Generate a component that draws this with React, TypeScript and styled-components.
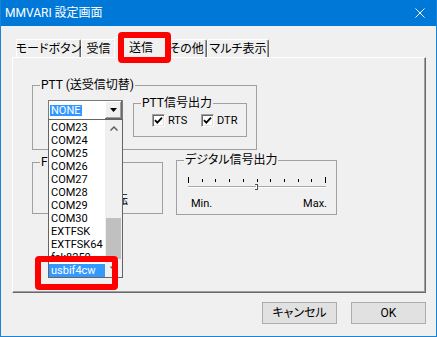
import React from "react";
import styled, { createGlobalStyle } from "styled-components";

const UI_FONT = `Roboto, "Noto Sans CJK JP", sans-serif`;

const GlobalStyle = createGlobalStyle`
  * { box-sizing: border-box; }
  html, body { margin: 0; padding: 0; }
  body {
    background: #ffffff;
    font-family: ${UI_FONT};
    font-feature-settings: "palt" 1;
    color: #000;
  }
`;

const Window = styled.div`
  width: 437px;
  height: 337px;
  display: flex;
  flex-direction: column;
  background: #f0f0f0;
  border: 1px solid #1883d7;
  border-top: 0;
  overflow: hidden;
`;

const TitleBar = styled.div`
  flex: none;
  height: 26px;
  display: flex;
  align-items: center;
  justify-content: space-between;
  padding: 0 11px 0 4px;
  background: #0078d7;
  color: #fff;
`;

const Title = styled.span`
  font-size: 12px;
  line-height: 16px;
  white-space: nowrap;
`;

const CloseIcon = styled.svg`
  display: block;
  width: 10px;
  height: 10px;
`;

const Body = styled.div`
  flex: 1;
  display: flex;
  flex-direction: column;
`;

const TabRow = styled.div`
  position: relative;
  z-index: 2;
  display: flex;
  align-items: flex-end;
  height: 20px;
  margin: 11px 0 0 15px;
`;

const Tab = styled.div<{ $w: number; $active?: boolean }>`
  position: relative;
  flex: none;
  width: ${(p) => p.$w + (p.$active ? 4 : 0)}px;
  height: ${(p) => (p.$active ? 21 : 18)}px;
  margin: 0 ${(p) => (p.$active ? -2 : 0)}px ${(p) => (p.$active ? -1 : 0)}px;
  display: flex;
  align-items: center;
  justify-content: center;
  padding-bottom: ${(p) => (p.$active ? 1 : 0)}px;
  background: #f0f0f0;
  border-top: 1px solid #fff;
  border-left: 1px solid #fff;
  border-right: 1px solid #696969;
  border-radius: 2px 2px 0 0;
  box-shadow: inset -1px 0 0 #a0a0a0;
  z-index: ${(p) => (p.$active ? 2 : 1)};
  font-size: 12px;
  line-height: 14px;
  white-space: nowrap;
`;

const Panel = styled.div`
  position: relative;
  z-index: 1;
  width: 414px;
  height: 236px;
  margin-left: 11px;
  padding: 27px 0 0 19px;
  display: flex;
  flex-direction: column;
  border-top: 1px solid #fff;
  border-left: 1px solid #fff;
  border-right: 1px solid #696969;
  border-bottom: 1px solid #696969;
  box-shadow: inset -1px -1px 0 #a0a0a0;
`;

const Group = styled.div<{ $w: number; $h: number; $mt?: number }>`
  position: relative;
  flex: none;
  width: ${(p) => p.$w}px;
  height: ${(p) => p.$h}px;
  margin-top: ${(p) => p.$mt ?? 0}px;
  border: 1px solid #a0a0a0;
`;

const Legend = styled.span`
  position: absolute;
  top: -8px;
  left: 7px;
  padding: 0 1px;
  background: #f0f0f0;
  font-size: 12px;
  line-height: 14px;
  white-space: nowrap;
`;

const PttBody = styled.div`
  display: flex;
  align-items: flex-start;
  gap: 10px;
  padding: 14px 0 0 15px;
`;

const GroupRow = styled.div`
  display: flex;
  align-items: flex-start;
  gap: 13px;
  margin-top: 10px;
`;

const Combo = styled.div`
  position: relative;
  flex: none;
  width: 75px;
  height: 20px;
  display: flex;
  align-items: center;
  justify-content: space-between;
  background: #fff;
  border: 1px solid #7a7a7a;
`;

const ComboValue = styled.span`
  margin-left: 1px;
  padding: 0 1px;
  height: 11px;
  background: #3399ff;
  color: #fff;
  font-size: 11px;
  line-height: 11px;
`;

const DropButton = styled.div`
  width: 17px;
  height: 18px;
  display: flex;
  align-items: center;
  justify-content: center;
  background: #f0f0f0;
  border-right: 1px solid #696969;
  border-bottom: 1px solid #696969;
  box-shadow: inset 1px 1px 0 #fff, inset -1px -1px 0 #a0a0a0;
`;

const DropList = styled.div`
  position: absolute;
  top: 100%;
  left: -1px;
  z-index: 5;
  width: 75px;
  display: flex;
  background: #fff;
  border: 1px solid #646464;
`;

const Items = styled.div`
  width: 56px;
  padding-top: 1px;
  overflow: hidden;
`;

const Item = styled.div<{ $sel?: boolean }>`
  height: 13px;
  padding-left: 2px;
  font-size: 11px;
  line-height: 13px;
  white-space: nowrap;
  background: ${(p) => (p.$sel ? "#3399ff" : "transparent")};
  color: ${(p) => (p.$sel ? "#fff" : "#000")};
`;

const ScrollBar = styled.div`
  width: 17px;
  display: flex;
  flex-direction: column;
  background: #f0f0f0;
`;

const ScrollArrow = styled.div`
  flex: none;
  height: 17px;
  display: flex;
  align-items: center;
  justify-content: center;
`;

const Track = styled.div`
  flex: 1;
`;

const Thumb = styled.div<{ $top: number; $h: number }>`
  width: 15px;
  height: ${(p) => p.$h}px;
  margin: ${(p) => p.$top}px 1px 0;
  background: #c0c0c0;
`;

const CheckRow = styled.div`
  display: flex;
  padding: 10px 0 0 18px;
`;

const CheckItem = styled.label<{ $w?: number }>`
  display: flex;
  align-items: center;
  gap: 3px;
  width: ${(p) => (p.$w ? `${p.$w}px` : "auto")};
  font-size: 11px;
  line-height: 13px;
`;

const CheckBox = styled.span`
  flex: none;
  width: 13px;
  height: 13px;
  display: flex;
  align-items: center;
  justify-content: center;
  background: #fff;
  border: 1px solid;
  border-color: #a0a0a0 #fff #fff #a0a0a0;
  box-shadow: inset 1px 1px 0 #696969, inset -1px -1px 0 #e3e3e3;
`;

const FskNote = styled.div`
  margin: 30px 0 0 36px;
  font-size: 12px;
  line-height: 14px;
  white-space: nowrap;
`;

const TrackBar = styled.svg`
  display: block;
  margin: 14px 0 0 9px;
`;

const ScaleLabels = styled.div`
  display: flex;
  justify-content: space-between;
  margin: 5px 9px 0 14px;
  font-size: 11px;
  line-height: 13px;
`;

const ButtonRow = styled.div`
  display: flex;
  justify-content: flex-end;
  gap: 14px;
  margin-top: 9px;
  padding-right: 10px;
`;

const Button = styled.button`
  width: 75px;
  height: 22px;
  padding: 0;
  background: #e1e1e1;
  border: 1px solid #adadad;
  font-family: ${UI_FONT};
  font-feature-settings: "palt" 1;
  font-size: 12px;
  line-height: 20px;
  color: #000;
`;

const RedMark = styled.div<{ $x: number; $y: number; $w: number; $h: number }>`
  position: absolute;
  left: ${(p) => p.$x}px;
  top: ${(p) => p.$y}px;
  width: ${(p) => p.$w}px;
  height: ${(p) => p.$h}px;
  border: 6px solid #ff0000;
  border-radius: 4px;
  pointer-events: none;
  z-index: 10;
`;

const Check = () => (
  <svg width="9" height="9" viewBox="0 0 9 9">
    <path d="M1 4.2 L3.3 6.6 L8 1.6" fill="none" stroke="#000" strokeWidth="1.8" />
  </svg>
);

const ports = [
  "COM23",
  "COM24",
  "COM25",
  "COM26",
  "COM27",
  "COM28",
  "COM29",
  "COM30",
  "EXTFSK",
  "EXTFSK64",
  "fsk8250",
  "usbif4cw",
];

const tabs = [
  { label: "モードボタン", w: 65 },
  { label: "受信", w: 35 },
  { label: "送信", w: 50, active: true },
  { label: "その他", w: 41 },
  { label: "マルチ表示", w: 62 },
];

const ticks = Array.from({ length: 11 }, (_, i) => Math.round(2 + 13.7 * i));

export default function App() {
  return (
    <>
      <GlobalStyle />
      <Window>
        <TitleBar>
          <Title>MMVARI 設定画面</Title>
          <CloseIcon viewBox="0 0 10 10">
            <path d="M0.5 0.5 L9.5 9.5 M9.5 0.5 L0.5 9.5" stroke="#fff" strokeWidth="1" />
          </CloseIcon>
        </TitleBar>
        <Body>
          <TabRow>
            {tabs.map((t) => (
              <Tab key={t.label} $w={t.w} $active={t.active}>
                {t.label}
                {t.active && <RedMark $x={3} $y={-6} $w={53} $h={31} />}
              </Tab>
            ))}
          </TabRow>
          <Panel>
            <Group $w={225} $h={65}>
              <Legend>PTT (送受信切替)</Legend>
              <PttBody>
                <Combo>
                  <ComboValue>NONE</ComboValue>
                  <DropButton>
                    <svg width="7" height="4" viewBox="0 0 7 4">
                      <polygon points="0,0 7,0 3.5,4" fill="#000" />
                    </svg>
                  </DropButton>
                  <DropList>
                    <Items>
                      {ports.map((p) => (
                        <Item key={p} $sel={p === "usbif4cw"}>
                          {p}
                        </Item>
                      ))}
                    </Items>
                    <ScrollBar>
                      <ScrollArrow>
                        <svg width="8" height="5" viewBox="0 0 8 5">
                          <polyline points="0.5,4.5 4,1 7.5,4.5" fill="none" stroke="#606060" strokeWidth="1.5" />
                        </svg>
                      </ScrollArrow>
                      <Track>
                        <Thumb $top={81} $h={41} />
                      </Track>
                      <ScrollArrow>
                        <svg width="8" height="5" viewBox="0 0 8 5">
                          <polyline points="0.5,0.5 4,4 7.5,0.5" fill="none" stroke="#606060" strokeWidth="1.5" />
                        </svg>
                      </ScrollArrow>
                    </ScrollBar>
                    <RedMark $x={-14} $y={136} $w={83} $h={34} />
                  </DropList>
                </Combo>
                <Group $w={114} $h={34} $mt={3}>
                  <Legend>PTT信号出力</Legend>
                  <CheckRow>
                    <CheckItem $w={49}>
                      <CheckBox>
                        <Check />
                      </CheckBox>
                      RTS
                    </CheckItem>
                    <CheckItem>
                      <CheckBox>
                        <Check />
                      </CheckBox>
                      DTR
                    </CheckItem>
                  </CheckRow>
                </Group>
              </PttBody>
            </Group>
            <GroupRow>
              <Group $w={131} $h={52} $mt={2}>
                <Legend>FSK</Legend>
                <FskNote>出力を反転</FskNote>
              </Group>
              <Group $w={161} $h={55}>
                <Legend>デジタル信号出力</Legend>
                <TrackBar width="142" height="17" viewBox="0 0 142 17">
                  {ticks.map((x, i) => {
                    const end = i === 0 || i === ticks.length - 1;
                    return <rect key={x} x={x} y={end ? 2 : 4} width="1" height={end ? 6 : 3} fill="#000" />;
                  })}
                  <rect x="2" y="11" width="138" height="1" fill="#a8a8a8" />
                  <rect x="2" y="12" width="138" height="1" fill="#fff" />
                  <rect x="70" y="9" width="1" height="6" fill="#fff" />
                  <rect x="71" y="9" width="1" height="6" fill="#505050" />
                  <rect x="69" y="9" width="2" height="1" fill="#505050" />
                  <rect x="69" y="14" width="2" height="1" fill="#505050" />
                </TrackBar>
                <ScaleLabels>
                  <span>Min.</span>
                  <span>Max.</span>
                </ScaleLabels>
              </Group>
            </GroupRow>
          </Panel>
          <ButtonRow>
            <Button>キャンセル</Button>
            <Button>OK</Button>
          </ButtonRow>
        </Body>
      </Window>
    </>
  );
}
